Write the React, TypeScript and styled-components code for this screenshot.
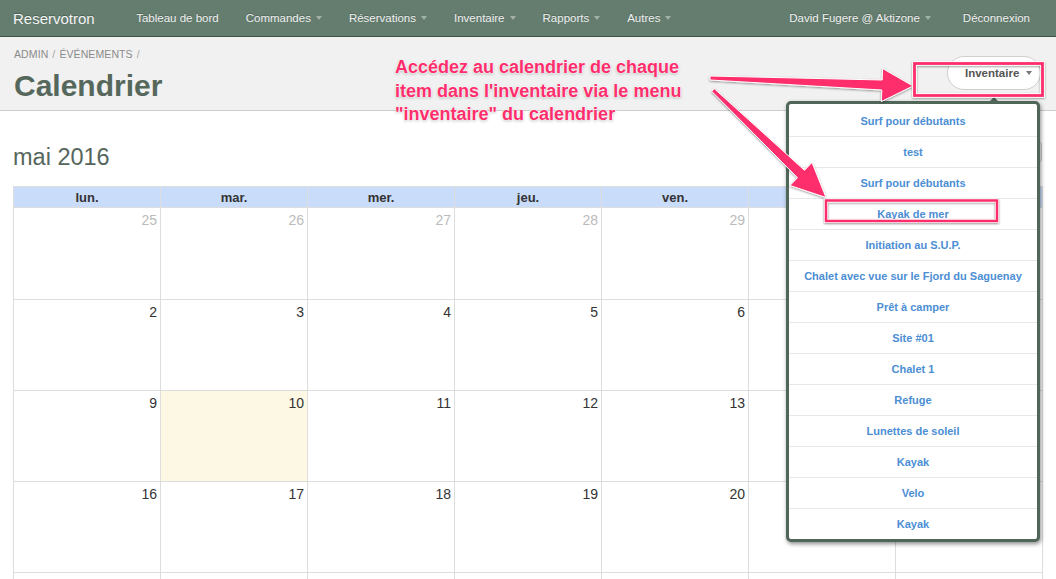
import React from "react";
import styled, { createGlobalStyle } from "styled-components";

const GlobalStyle = createGlobalStyle`
  html, body { margin: 0; padding: 0; background: #fff; }
  body { font-family: "Liberation Sans", Arial, Helvetica, sans-serif; overflow: hidden; }
  * { box-sizing: border-box; }
`;

const Page = styled.div`
  position: relative;
  width: 1056px;
  height: 579px;
  overflow: hidden;
  background: #fff;
`;

const Navbar = styled.nav`
  display: flex;
  align-items: center;
  height: 37px;
  padding: 0 10px 0 13px;
  background: #647d6f;
  border-bottom: 1px solid #3f5346;
`;

const Brand = styled.a`
  font-size: 15px;
  color: #f5f5f5;
  text-shadow: 0 -1px 0 rgba(0, 0, 0, 0.25);
  margin-right: 28px;
`;

const NavGroup = styled.div`
  display: flex;
  align-items: center;
  height: 100%;
`;

const Spacer = styled.div`
  flex: 1;
`;

const NavItem = styled.a<{ $wide?: boolean }>`
  display: flex;
  align-items: center;
  height: 100%;
  padding: 0 ${(p) => (p.$wide ? "16px" : "13.5px")};
  font-size: 11.5px;
  color: #f0f0f0;
  text-shadow: 0 -1px 0 rgba(0, 0, 0, 0.2);
  white-space: nowrap;
`;

const NavCaret = styled.span`
  display: inline-block;
  margin-left: 5px;
  width: 0;
  height: 0;
  border-top: 4px solid rgba(255, 255, 255, 0.4);
  border-left: 3.5px solid transparent;
  border-right: 3.5px solid transparent;
`;

const Header = styled.header`
  display: flex;
  justify-content: space-between;
  align-items: flex-start;
  height: 74px;
  padding: 11px 15px 0 14px;
  background: #f1f1f1;
  border-bottom: 1px solid #cdcdcd;
`;

const TitleBlock = styled.div`
  display: flex;
  flex-direction: column;
`;

const Breadcrumb = styled.div`
  font-size: 10.5px;
  line-height: 12.6px;
  color: #8b8b8b;
  letter-spacing: 0.1px;
`;

const Sep = styled.span`
  color: #a8a8a8;
  margin: 0 4px;
`;

const Title = styled.h1`
  margin: 7px 0 0;
  font-size: 30px;
  line-height: 36px;
  font-weight: bold;
  color: #56685c;
`;

const DropdownWrap = styled.div`
  position: relative;
  margin-top: 8px;
`;

const PillButton = styled.button`
  display: flex;
  align-items: center;
  height: 34px;
  width: 94px;
  padding: 0 9px 0 17px;
  border: 1px solid #cfcfcf;
  border-radius: 17px;
  background: #fff;
  font-family: inherit;
  font-size: 11.5px;
  font-weight: bold;
  color: #555;
`;

const DarkCaret = styled.span`
  display: inline-block;
  margin-left: 7px;
  width: 0;
  height: 0;
  border-top: 4px solid #777;
  border-left: 3px solid transparent;
  border-right: 3px solid transparent;
`;

const Menu = styled.div`
  position: absolute;
  top: 45px;
  right: 1px;
  width: 254px;
  padding-top: 1px;
  background: #fff;
  border: 3px solid #4f6658;
  border-radius: 5px;
  box-shadow: 1px 2px 4px rgba(0, 0, 0, 0.45);
  z-index: 5;

  &::before {
    content: "";
    position: absolute;
    top: -7px;
    left: 201px;
    border-bottom: 4px solid #4f6658;
    border-left: 4px solid transparent;
    border-right: 4px solid transparent;
  }
`;

const MenuItem = styled.a`
  display: flex;
  align-items: center;
  justify-content: center;
  height: 31px;
  font-size: 11px;
  font-weight: bold;
  color: #4b8ed4;
  border-top: 1px solid #e8e8e8;
  white-space: nowrap;

  &:first-child {
    border-top: none;
  }
`;

const Main = styled.main`
  padding: 32px 14px 0 13px;
`;

const Toolbar = styled.div`
  display: flex;
  justify-content: space-between;
  align-items: flex-start;
  height: 28px;
  margin-bottom: 15px;
`;

const MonthTitle = styled.h2`
  margin: 0;
  font-size: 23.5px;
  line-height: 28px;
  font-weight: normal;
  color: #56665c;
`;

const ButtonGroup = styled.div`
  display: flex;
  margin-top: -2px;
  gap: 8px;
`;

const ButtonSet = styled.div`
  display: flex;
`;

const CalButton = styled.button`
  height: 22px;
  padding: 0 10px;
  border: 1px solid #ccc;
  background: #f5f5f5;
  font-family: inherit;
  font-size: 12px;
  color: #333;
  margin-left: -1px;

  &:first-child {
    border-radius: 4px 0 0 4px;
    margin-left: 0;
  }
  &:last-child {
    border-radius: 0 4px 4px 0;
  }
`;

const Calendar = styled.div`
  display: grid;
  grid-template-columns: repeat(7, 147px);
  grid-template-rows: 21px 92px repeat(5, 91px);
  border-left: 1px solid #ddd;
  border-top: 1px solid #ddd;
  width: 1030px;
`;

const HeadCell = styled.div`
  display: flex;
  align-items: center;
  justify-content: center;
  background: #c9dcfa;
  border-right: 1px solid #ddd;
  border-bottom: 1px solid #ddd;
  font-size: 13px;
  font-weight: bold;
  color: #333;
`;

const DayCell = styled.div<{ $today?: boolean; $other?: boolean }>`
  background: ${(p) => (p.$today ? "#fcf8e3" : "#fff")};
  border-right: 1px solid #ddd;
  border-bottom: 1px solid #ddd;
  padding: 4px 3px 0 0;
  text-align: right;
  font-size: 14px;
  line-height: 16px;
  color: ${(p) => (p.$other ? "#bbb" : "#333")};
`;

const AnnotationLayer = styled.svg`
  position: absolute;
  left: 0;
  top: 0;
  width: 1056px;
  height: 579px;
  pointer-events: none;
  z-index: 9;
`;

const AnnotationText = styled.div`
  position: absolute;
  left: 395px;
  top: 56px;
  z-index: 10;
  font-size: 18px;
  line-height: 23.5px;
  font-weight: bold;
  color: #fe2e6c;
  white-space: pre;
  text-shadow: 0 0 1px #fff, 0 0 2px #fff, 0 0 2px #fff, 0 1px 3px rgba(0, 0, 0, 0.35);
`;

const menuItems = [
  "Surf pour débutants",
  "test",
  "Surf pour débutants",
  "Kayak de mer",
  "Initiation au S.U.P.",
  "Chalet avec vue sur le Fjord du Saguenay",
  "Prêt à camper",
  "Site #01",
  "Chalet 1",
  "Refuge",
  "Lunettes de soleil",
  "Kayak",
  "Velo",
  "Kayak",
];

const days = ["lun.", "mar.", "mer.", "jeu.", "ven.", "sam.", "dim."];

type Day = { n: number; other?: boolean; today?: boolean };

const weeks: Day[][] = [
  [25, 26, 27, 28, 29, 30].map((n) => ({ n, other: true })).concat([{ n: 1 }]),
  [2, 3, 4, 5, 6, 7, 8].map((n) => ({ n })),
  [9, 10, 11, 12, 13, 14, 15].map((n) => ({ n, today: n === 10 })),
  [16, 17, 18, 19, 20, 21, 22].map((n) => ({ n })),
  [23, 24, 25, 26, 27, 28, 29].map((n) => ({ n })),
  [{ n: 30 }, { n: 31 }].concat([1, 2, 3, 4, 5].map((n) => ({ n, other: true }))),
];

const navLeft: { label: string; caret?: boolean }[] = [
  { label: "Tableau de bord" },
  { label: "Commandes", caret: true },
  { label: "Réservations", caret: true },
  { label: "Inventaire", caret: true },
  { label: "Rapports", caret: true },
  { label: "Autres", caret: true },
];

const PINK = "#fe2e6c";

export default function App() {
  return (
    <Page>
      <GlobalStyle />
      <Navbar>
        <Brand>Reservotron</Brand>
        <NavGroup>
          {navLeft.map((it) => (
            <NavItem key={it.label}>
              {it.label}
              {it.caret && <NavCaret />}
            </NavItem>
          ))}
        </NavGroup>
        <Spacer />
        <NavGroup>
          <NavItem $wide>
            David Fugere @ Aktizone
            <NavCaret />
          </NavItem>
          <NavItem $wide>Déconnexion</NavItem>
        </NavGroup>
      </Navbar>

      <Header>
        <TitleBlock>
          <Breadcrumb>
            ADMIN<Sep>/</Sep>ÉVÉNEMENTS<Sep>/</Sep>
          </Breadcrumb>
          <Title>Calendrier</Title>
        </TitleBlock>
        <DropdownWrap>
          <PillButton>
            Inventaire
            <DarkCaret />
          </PillButton>
          <Menu>
            {menuItems.map((m, i) => (
              <MenuItem key={i}>{m}</MenuItem>
            ))}
          </Menu>
        </DropdownWrap>
      </Header>

      <Main>
        <Toolbar>
          <MonthTitle>mai 2016</MonthTitle>
          <ButtonGroup>
            <ButtonSet>
              <CalButton>aujourd'hui</CalButton>
            </ButtonSet>
            <ButtonSet>
              <CalButton>‹</CalButton>
              <CalButton>›</CalButton>
            </ButtonSet>
          </ButtonGroup>
        </Toolbar>
        <Calendar>
          {days.map((d) => (
            <HeadCell key={d}>{d}</HeadCell>
          ))}
          {weeks.map((w, wi) =>
            w.map((d, di) => (
              <DayCell key={`${wi}-${di}`} $other={d.other} $today={d.today}>
                {d.n}
              </DayCell>
            ))
          )}
        </Calendar>
      </Main>

      <AnnotationLayer viewBox="0 0 1056 579">
        <defs>
          <filter id="shadow" x="-20%" y="-20%" width="140%" height="140%">
            <feDropShadow dx="0" dy="1" stdDeviation="1.2" floodColor="#000" floodOpacity="0.4" />
          </filter>
        </defs>
        <g filter="url(#shadow)" stroke="#fff" strokeWidth="1" strokeLinejoin="round">
          <polygon
            fill={PINK}
            points="710,76 882.2,80 882.6,68.5 913,86 881.4,101.5 881.8,90 710,80"
          />
          <polygon
            fill={PINK}
            points="714.2,88.6 804.5,170.3 812,162.5 826,197.5 790,185.5 797.5,177.7 711.8,91.4"
          />
        </g>
        <g filter="url(#shadow)" fill="none">
          <rect x="914.5" y="63.5" width="128" height="32" stroke="#fff" strokeWidth="4.5" />
          <rect x="914.5" y="63.5" width="128" height="32" stroke={PINK} strokeWidth="2.8" />
          <rect x="826" y="200.5" width="171" height="20.5" stroke="#fff" strokeWidth="4" />
          <rect x="826" y="200.5" width="171" height="20.5" stroke={PINK} strokeWidth="2.5" />
        </g>
      </AnnotationLayer>
      <AnnotationText>
        {"Accédez au calendrier de chaque\nitem dans l'inventaire via le menu\n\"inventaire\" du calendrier"}
      </AnnotationText>
    </Page>
  );
}
